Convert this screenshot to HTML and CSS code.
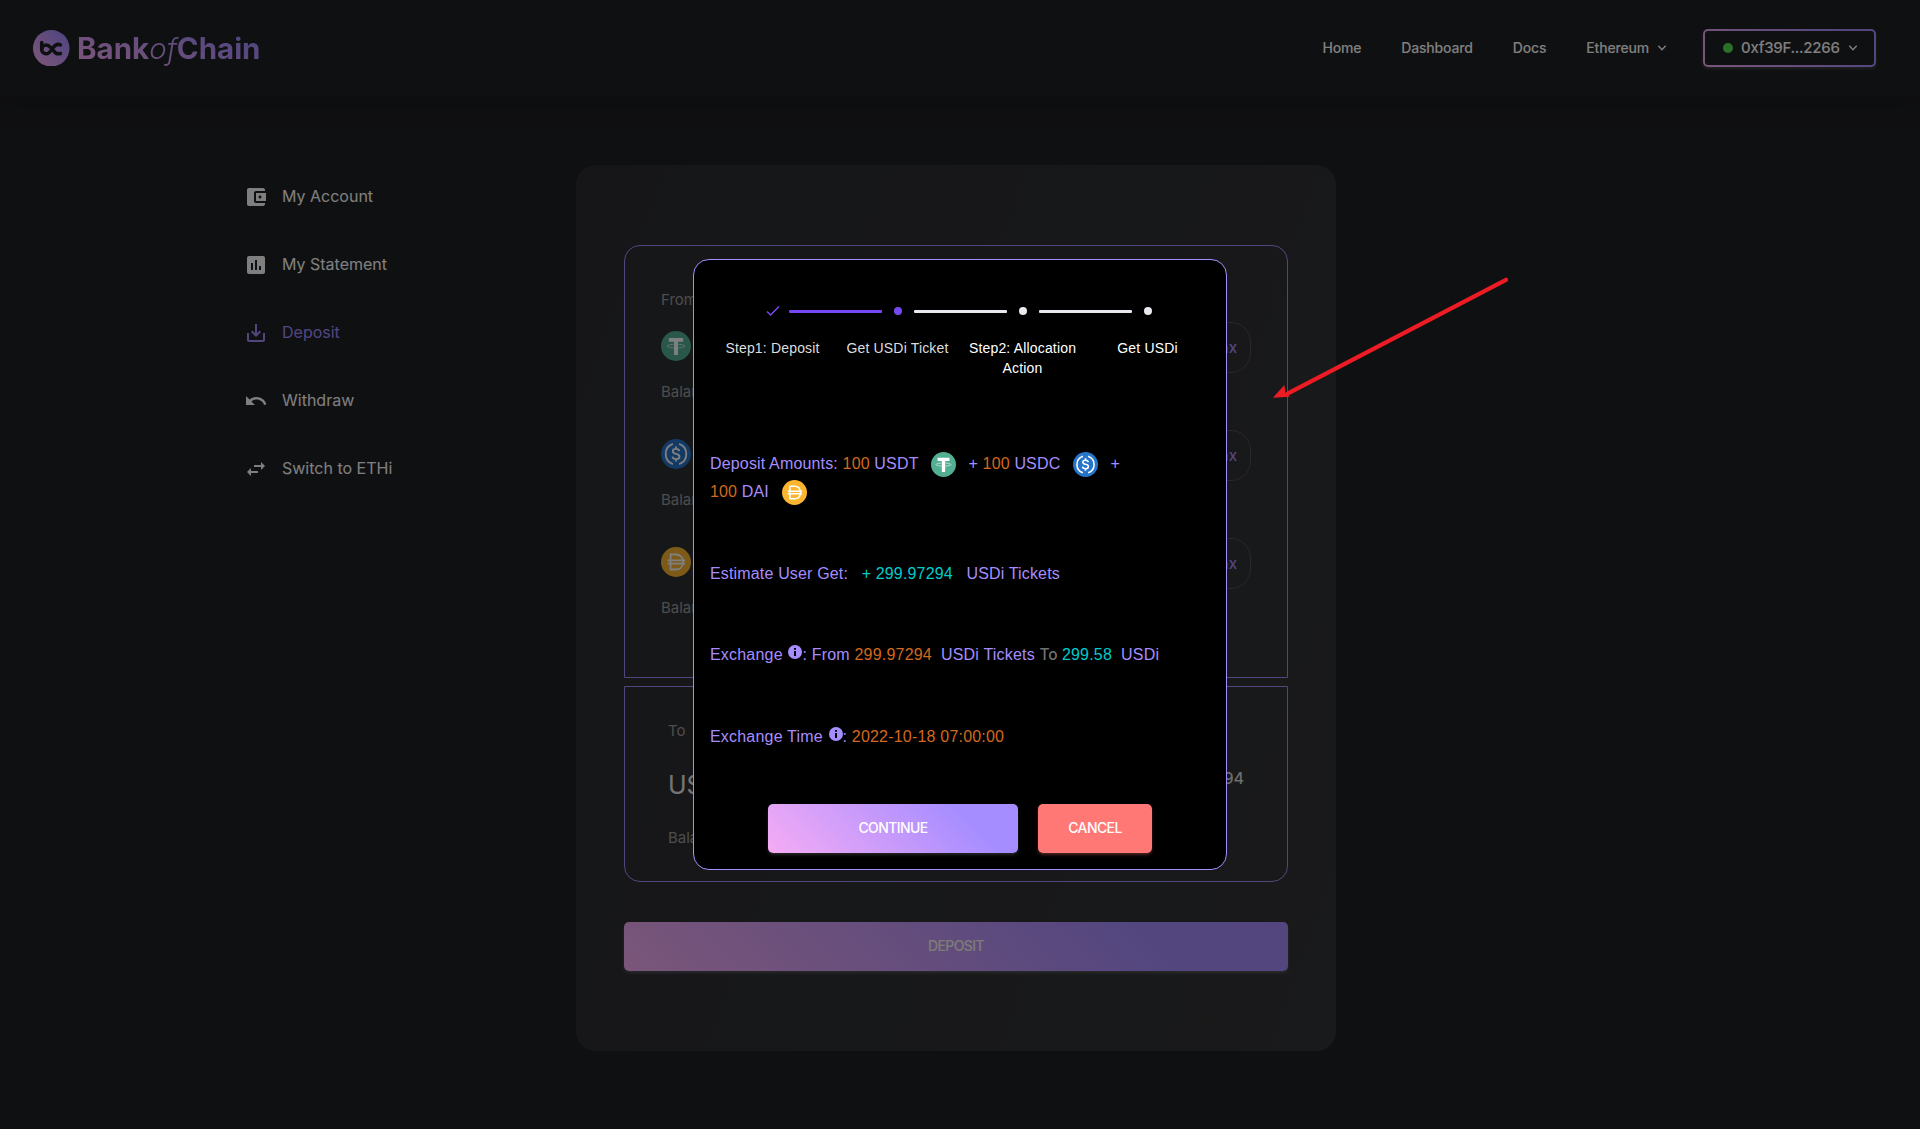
FILE: index.html
```html
<!DOCTYPE html>
<html lang="en">
<head>
<meta charset="utf-8">
<title>Bank of Chain</title>
<link rel="stylesheet" href="styles.css">
</head>
<body>
<svg class="defs" aria-hidden="true">
  <defs>
    <linearGradient id="brand" x1="0" y1="1" x2="1" y2="0"><stop offset="0.1" stop-color="#f5acf4"/><stop offset="0.85" stop-color="#a68dff"/></linearGradient>
    <symbol id="usdt" viewBox="0 0 32 32">
      <circle cx="16" cy="16" r="16" fill="#53ae94"/>
      <path fill="#fff" d="M8.4 7.4h15.2v4.1h-5.5v14h-4.2v-14H8.400z"/>
      <ellipse cx="16" cy="16.100" rx="9.600" ry="2" fill="none" stroke="#fff" stroke-width="0.8" opacity="0.85"/>
    </symbol>
    <symbol id="usdc" viewBox="0 0 32 32">
      <circle cx="16" cy="16" r="16" fill="#2775ca"/>
      <g fill="none" stroke="#fff" stroke-width="2">
        <path d="M12.700 5.300a11.300 11.300 0 0 0 0 21.400M19.300 5.300a11.300 11.300 0 0 1 0 21.400"/>
        <path d="M19.500 13c-.2-1.700-1.500-2.500-3.500-2.500s-3.400.9-3.400 2.500c0 1.800 1.500 2.400 3.400 2.800 2.200.4 3.700 1 3.700 2.900 0 1.700-1.500 2.800-3.700 2.800-2.100 0-3.500-.9-3.800-2.700M16 8v2.500M16 21.500V24"/>
      </g>
    </symbol>
    <symbol id="dai" viewBox="0 0 32 32">
      <circle cx="16" cy="16" r="16" fill="#fbb52f"/>
      <path d="M10.200 8h5.800c4.600 0 7.500 3.200 7.500 8s-2.900 8-7.500 8h-5.800zM7.200 14.300h18.600M7.200 17.700h18.600" fill="none" stroke="#fff" stroke-width="1.900"/>
    </symbol>
    <symbol id="info" viewBox="0 0 14 14">
      <circle cx="7" cy="7" r="7" fill="#a68dff"/>
      <path fill="#000" d="M6 3h2v1.700H6zM6 6h2v5H6z"/>
    </symbol>
    <symbol id="chevron" viewBox="0 0 10 8"><path d="M1.300 1.800 5 5.800l3.700-4" fill="none" stroke="#fff" stroke-width="1.400"/></symbol>
  </defs>
</svg>

<header class="topbar">
  <a class="brand">
    <svg class="brand-mark" viewBox="0 0 36 36">
      <circle cx="18" cy="18" r="18" fill="url(#brand)"/>
      <g fill="none" stroke="#1f2024" stroke-width="3.500" stroke-linecap="round">
        <path d="M8.600 12.400v6.400"/>
        <path d="M27 14.600c-3.600-1.300-5.600.3-7.700 3.500-2.300 3.500-3.700 5.400-6.300 5.400a4.400 4.400 0 1 1 0-8.800c2 0 3.200 1.100 4.300 2.400M20.500 20.500c1.500 2.600 3.800 3.500 6.600 2.700"/>
      </g>
    </svg>
    <span class="brand-name">Bank<i>of</i>Chain</span>
  </a>
  <nav class="menu">
    <a>Home</a>
    <a>Dashboard</a>
    <a>Docs</a>
    <a class="network">Ethereum <svg class="chevron"><use href="#chevron"/></svg></a>
  </nav>
  <button class="account"><span class="status"></span><span class="address">0xf39F...2266</span><svg class="chevron"><use href="#chevron"/></svg></button>
</header>

<main class="page">
  <aside class="sidebar">
    <a class="side-item"><svg viewBox="0 0 24 24"><path d="M21 18v1c0 1.100-.9 2-2 2H5c-1.110 0-2-.9-2-2V5c0-1.100.89-2 2-2h14c1.100 0 2 .9 2 2v1h-9c-1.110 0-2 .9-2 2v8c0 1.100.89 2 2 2h9zm-9-2h10V8H12v8zm4-2.500c-.83 0-1.500-.67-1.500-1.500s.67-1.500 1.500-1.500 1.500.67 1.500 1.500-.67 1.500-1.500 1.500z"/></svg><span>My Account</span></a>
    <a class="side-item"><svg viewBox="0 0 24 24"><path d="M19 3H5c-1.100 0-2 .9-2 2v14c0 1.100.9 2 2 2h14c1.100 0 2-.9 2-2V5c0-1.100-.9-2-2-2zM9 17H7v-7h2v7zm4 0h-2V7h2v10zm4 0h-2v-4h2v4z"/></svg><span>My Statement</span></a>
    <a class="side-item active"><svg viewBox="0 0 24 24"><path d="M3 12h2v7h14v-7h2v7c0 1.100-.9 2-2 2H5c-1.100 0-2-.9-2-2zM11 3h2v9.200l2.600-2.600L17 11l-5 5-5-5 1.400-1.400 2.600 2.600z"/></svg><span>Deposit</span></a>
    <a class="side-item"><svg viewBox="0 0 24 24"><path d="M12.500 8c-2.650 0-5.050.99-6.900 2.600L2 7v9h9l-3.620-3.620c1.390-1.160 3.160-1.880 5.120-1.880 3.540 0 6.550 2.310 7.600 5.500l2.370-.78C21.080 11.030 17.150 8 12.500 8z"/></svg><span>Withdraw</span></a>
    <a class="side-item"><svg viewBox="0 0 24 24"><path d="M6.990 11L3 15l3.990 4v-3H14v-2H6.990v-3zM21 9l-3.990-4v3H10v2h7.010v3L21 9z"/></svg><span>Switch to ETHi</span></a>
  </aside>

  <section class="card">
    <div class="panel from">
      <p class="caption">From</p>
      <div class="token"><svg class="coin"><use href="#usdt"/></svg><button class="max">Max</button></div>
      <p class="balance">Balance</p>
      <div class="token"><svg class="coin"><use href="#usdc"/></svg><button class="max">Max</button></div>
      <p class="balance">Balance</p>
      <div class="token"><svg class="coin"><use href="#dai"/></svg><button class="max">Max</button></div>
      <p class="balance">Balance</p>
    </div>
    <div class="panel to">
      <p class="caption">To</p>
      <div class="result"><span class="symbol">USDi</span><span class="estimate">299.97294</span></div>
      <p class="balance">Balance</p>
    </div>
    <button class="deposit">DEPOSIT</button>
  </section>
</main>

<div class="overlay">
  <div class="modal">
    <ol class="steps">
      <li class="done"><div class="rail"><svg class="tick" viewBox="0 0 14 12"><path d="M1 6.500 4.600 10 13 1.500" fill="none" stroke="#7648f5" stroke-width="1.500"/></svg></div>Step1: Deposit</li>
      <li class="current"><div class="rail"><span class="dot"></span></div>Get USDi Ticket</li>
      <li><div class="rail"><span class="dot"></span></div>Step2: Allocation Action</li>
      <li><div class="rail"><span class="dot"></span></div>Get USDi</li>
    </ol>
    <div class="details">
      <p class="amounts">Deposit Amounts: <b>100</b> USDT <svg class="token-icon"><use href="#usdt"/></svg> + <b>100</b> USDC <svg class="token-icon"><use href="#usdc"/></svg> +<br><b>100</b> DAI <svg class="token-icon"><use href="#dai"/></svg></p>
      <p class="tickets">Estimate User Get: <em class="gap">+ 299.97294</em> USDi Tickets</p>
      <p>Exchange <svg class="info"><use href="#info"/></svg>: From <b>299.97294</b><span class="unit">USDi Tickets</span> <span class="muted">To</span> <em>299.58</em><span class="unit">USDi</span></p>
      <p>Exchange Time <svg class="info"><use href="#info"/></svg>: <b>2022-10-18 07:00:00</b></p>
    </div>
    <div class="actions"><button class="continue">CONTINUE</button><button class="cancel">CANCEL</button></div>
  </div>
</div>

<svg class="pointer" viewBox="0 0 240 124">
  <path d="M235 4.800 17 118.300" stroke="#ed1c24" stroke-width="4.300" stroke-linecap="round"/>
  <path d="M2 122.700 13.300 110 14.500 117.500 19 121.700Z" fill="#ed1c24"/>
</svg>
</body>
</html>
```
FILE: styles.css
```css
* { box-sizing: border-box; }
body {
  position: relative;
  margin: 0;
  width: 1920px;
  height: 1129px;
  overflow: hidden;
  background: #1f2023;
  color: #fff;
  font: 500 16px/24px Inter, "Open Sans", sans-serif;
}
p, ol { margin: 0; padding: 0; font-weight: inherit; }
button { border: 0; padding: 0; color: #fff; font: inherit; letter-spacing: inherit; }
.defs { position: absolute; width: 0; height: 0; }

.topbar {
  display: flex;
  align-items: center;
  height: 96px;
  padding: 0 44px 0 33px;
  box-shadow: 0 8px 24px rgba(0, 0, 0, .18);
}
.brand { display: flex; align-items: center; gap: 7.500px; margin-right: auto; }
.brand-mark { width: 36.500px; height: 36.500px; }
.brand-name {
  font-size: 29.500px;
  line-height: 38px;
  font-weight: 700;
  background: linear-gradient(20deg, #f5acf4 5%, #a68dff 85%);
  background-clip: text;
  -webkit-background-clip: text;
  color: transparent;
}
.brand-name i { font-weight: 300; }
.menu { display: flex; gap: 40px; font-size: 14px; letter-spacing: -.17px; margin-right: 36px; }
.menu a { display: flex; align-items: center; gap: 8px; }
.chevron { width: 10px; height: 8px; }
.account {
  display: flex;
  align-items: center;
  width: 173px;
  height: 38px;
  padding-left: 18px;
  border: 2px solid transparent;
  border-radius: 5px;
  background: linear-gradient(#1f2023, #1f2023) padding-box, linear-gradient(45deg, #f5acf4, #a68dff 85%) border-box;
  box-shadow: 0 2px 3px rgba(255, 255, 255, .15);
}
.status { width: 10px; height: 10px; margin-right: 8px; border-radius: 50%; background: #52e052; }
.address { margin-right: 8px; font-size: 15px; letter-spacing: -.28px; }

.page { display: flex; padding: 69px 0 0 244px; }
.sidebar { display: flex; flex-direction: column; gap: 44px; width: 332px; padding-top: 20px; }
.side-item { display: flex; align-items: center; gap: 14px; height: 24px; font-weight: 400; }
.side-item span { padding-bottom: 2px; }
.side-item svg { width: 24px; height: 24px; fill: #fff; }
.side-item.active { color: #a68dff; }
.side-item.active svg { fill: #a68dff; }

.card {
  width: 760px;
  height: 886px;
  padding: 80px 48px 0;
  border-radius: 20px;
  background: linear-gradient(110deg, #2c2d32, #2f3034 50%, #333436);
}
.panel { border: 1px solid #a68dff; color: #b0b0b0; }
.from { height: 433px; padding: 42px 36px 0; border-radius: 16px 16px 0 0; }
.to { height: 196px; margin-top: 8px; padding: 32px 43px 0; border-radius: 0 0 16px 16px; }
.caption, .balance { font-size: 15px; font-weight: 400; color: #9a9a9a; }
.token { display: flex; justify-content: space-between; align-items: center; height: 51px; margin-top: 10px; }
.coin { width: 30px; height: 30px; margin-bottom: 3px; }
.max { width: 80px; height: 51px; padding: 0 13px 0 0; border: 1px solid #505052; border-radius: 20px; background: none; color: #a68dff; font-size: 15px; text-align: right; }
.balance { margin-top: 7px; }
.from .balance + .token { margin-top: 26px; }
.result { display: flex; align-items: center; justify-content: space-between; height: 30px; margin: 27px 0 26px; color: #e8e8e8; }
.symbol { font-size: 25px; font-weight: 400; }
.estimate { margin-bottom: 15px; color: #d8d8d8; }
.to .balance { margin-top: 0; }
.deposit {
  width: 100%;
  height: 49px;
  margin-top: 40px;
  padding-bottom: 1px;
  border-radius: 5px;
  background: linear-gradient(45deg, #f5acf4, #a68dff 78%);
  color: #fafaea;
  font-size: 14px;
  letter-spacing: -.6px;
  box-shadow: 0 2px 3px rgba(255, 255, 255, .16);
}

.overlay {
  position: absolute;
  inset: 0;
  display: flex;
  align-items: center;
  justify-content: center;
  background: rgba(0, 0, 0, .5);
}
.modal {
  width: 534px;
  height: 611px;
  padding: 41px 16px 0;
  border: 1px solid #a68dff;
  border-radius: 16px;
  background: #000;
  color: #a68dff;
  font: 16px/28px "Liberation Sans", Arial, sans-serif;
  letter-spacing: .2px;
}
.steps { display: grid; grid-template-columns: repeat(4, 125px); list-style: none; height: 131px; font-size: 14px; line-height: 20px; text-align: center; letter-spacing: .17px; }
.steps li { padding: 0 4px; color: #fff; }
.steps li.done, .steps li.current { color: #ddd; }
.rail { display: grid; grid-template-columns: 20px; justify-content: center; justify-items: center; align-items: center; position: relative; height: 20px; margin: 0 -4px 17px; }
.rail::after { content: ""; position: absolute; left: 79px; top: 9px; width: 93px; height: 3px; background: #e8e8ee; border-radius: 1px; }
.done .rail::after { background: #7648f5; }
li:last-child .rail::after { display: none; }
.tick { width: 14px; height: 12px; }
.dot { width: 8px; height: 8px; border-radius: 50%; background: #e8e8ee; }
.current .dot { background: #7648f5; }
.details { height: 372px; padding-top: 18px; }
.details p { height: 28px; margin-bottom: 53.500px; white-space: pre-wrap; }
.details .amounts { height: 56px; letter-spacing: .16px; }
.details .tickets { letter-spacing: .16px; }
.details b { color: #d2691e; font-weight: 400; }
.details em { color: #00cbcb; font-style: normal; }
.gap { margin: 0 9px 0 9px; }
.unit { margin-left: 9px; }
.muted { color: #707070; font-family: Inter, sans-serif; font-weight: 500; font-size: 15.500px; line-height: 20px; letter-spacing: -.3px; }
.token-icon { width: 25px; height: 25px; margin: 0 8px 0 8px; vertical-align: -8px; }
.info { width: 14px; height: 14px; margin-left: 1px; vertical-align: 1px; }
.actions { display: flex; justify-content: center; gap: 20px; font: 500 14px/24px Inter, sans-serif; letter-spacing: -.6px; }
.continue, .cancel { height: 49px; padding-bottom: 1px; border-radius: 5px; }
.continue { width: 250px; background: linear-gradient(45deg, #f5acf4, #a68dff 78%); box-shadow: 0 2px 3px rgba(255, 255, 255, .15); }
.cancel { width: 114px; background: #ff7875; box-shadow: 0 2px 3px rgba(255, 120, 117, .3); }

.pointer { position: absolute; left: 1271px; top: 275px; width: 240px; height: 124px; }
```
